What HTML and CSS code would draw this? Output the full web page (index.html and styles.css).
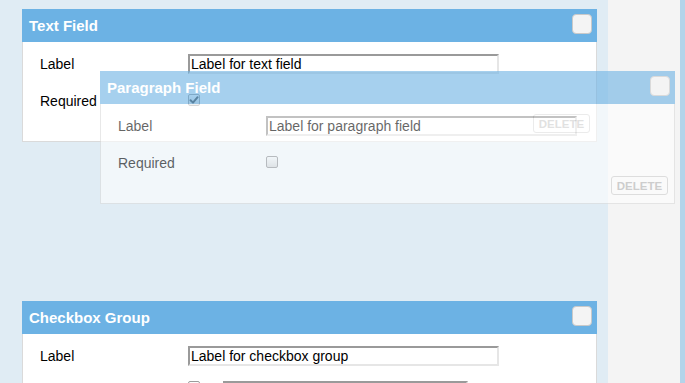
FILE: index.html
```html
<!DOCTYPE html>
<html lang="en">
<head>
<meta charset="utf-8">
<title>Form Builder</title>
<link rel="stylesheet" href="styles.css">
</head>
<body>
<div class="app">
  <main class="canvas">
    <section class="card">
      <header class="card-head">
        <h2 class="card-title">Text Field</h2>
        <span class="head-toggle"></span>
      </header>
      <div class="card-body">
        <div class="row">
          <span class="row-label">Label</span>
          <div class="row-value"><input class="text-input" type="text" value="Label for text field"></div>
        </div>
        <div class="row">
          <span class="row-label">Required</span>
          <div class="row-value"><span class="check is-checked"><svg viewBox="0 0 12 12" width="12" height="12"><path d="M2.5 6.2 L5 8.6 L9.6 3.2" fill="none" stroke="#3d3d3d" stroke-width="2" stroke-linecap="round" stroke-linejoin="round"/></svg></span></div>
        </div>
        <div class="card-foot"><button class="delete-btn" type="button">DELETE</button></div>
      </div>
    </section>

    <div class="drop-placeholder"></div>

    <section class="card">
      <header class="card-head">
        <h2 class="card-title">Checkbox Group</h2>
        <span class="head-toggle"></span>
      </header>
      <div class="card-body">
        <div class="row">
          <span class="row-label">Label</span>
          <div class="row-value"><input class="text-input" type="text" value="Label for checkbox group"></div>
        </div>
        <div class="row row-options">
          <span class="row-label"></span>
          <div class="row-value option-line"><span class="check"></span><input class="text-input option-input" type="text" value=""></div>
        </div>
      </div>
    </section>
  </main>
  <aside class="sidebar"></aside>
  <div class="edge-strip"></div>

  <section class="card drag-ghost">
    <header class="card-head">
      <h2 class="card-title">Paragraph Field</h2>
      <span class="head-toggle"></span>
    </header>
    <div class="card-body">
      <div class="row">
        <span class="row-label">Label</span>
        <div class="row-value"><input class="text-input" type="text" value="Label for paragraph field"></div>
      </div>
      <div class="row">
        <span class="row-label">Required</span>
        <div class="row-value"><span class="check"></span></div>
      </div>
      <div class="card-foot"><button class="delete-btn" type="button">DELETE</button></div>
    </div>
  </section>
</div>
</body>
</html>
```

FILE: styles.css
```css
* { box-sizing: border-box; }

html, body {
  margin: 0;
  padding: 0;
  height: 383px;
  overflow: hidden;
}

body {
  font-family: "Liberation Sans", Arial, sans-serif;
  font-size: 14px;
  color: #000;
  background: #f4f4f4;
}

.app {
  position: relative;
  display: flex;
  height: 383px;
}

.canvas {
  width: 608px;
  flex: none;
  background: #e0ecf4;
  padding: 9px 0 0 22px;
  display: flex;
  flex-direction: column;
  gap: 13px;
  overflow: hidden;
}

.sidebar {
  width: 72px;
  flex: none;
  background: #f4f4f4;
}

.edge-strip {
  width: 5px;
  flex: none;
  background: #b4d4ea;
}

.card {
  width: 575px;
  flex: none;
}

.card-head {
  height: 33px;
  background: #6cb2e4;
  display: flex;
  justify-content: space-between;
  align-items: flex-start;
  padding: 0 5px 0 7px;
}

.card-title {
  margin: 0;
  font-size: 15px;
  font-weight: bold;
  color: #fff;
  line-height: 33px;
}

.head-toggle {
  width: 20px;
  height: 20px;
  margin-top: 5px;
  border: 1px solid #c9c9c9;
  border-radius: 4px;
  background: #f4f4f4;
}

.card-body {
  background: #fff;
  border: 1px solid #dadada;
  border-top: none;
  padding: 9px 6px 8px 17px;
  display: flex;
  flex-direction: column;
}

.row {
  display: flex;
  align-items: center;
  height: 26px;
}

.row + .row {
  margin-top: 11px;
}

.row-label {
  width: 148px;
  flex: none;
}

.row-value {
  display: flex;
  align-items: center;
}

.text-input {
  width: 311px;
  height: 20px;
  margin: 0;
  padding: 0 1px;
  font-family: "Liberation Sans", Arial, sans-serif;
  font-size: 14px;
  color: #000;
  background: #fff;
  border-style: solid;
  border-width: 2px;
  border-color: #9a9a9a #e6e6e6 #e6e6e6 #9a9a9a;
  outline: none;
}

.check {
  width: 12px;
  height: 12px;
  margin-bottom: 3px;
  border: 1px solid #9c9c9c;
  border-radius: 2px;
  background: linear-gradient(#fdfdfd, #dedede);
  display: flex;
  align-items: center;
  justify-content: center;
}

.check svg {
  display: block;
  flex: none;
}

.card-foot {
  display: flex;
  justify-content: flex-end;
}

.delete-btn {
  width: 57px;
  height: 19px;
  padding: 0;
  font-family: "Liberation Sans", Arial, sans-serif;
  font-size: 11.5px;
  font-weight: bold;
  color: #b4b4b4;
  background: transparent;
  border: 1px solid #cfcfcf;
  border-radius: 3px;
}

.drop-placeholder {
  height: 133px;
  flex: none;
}

.row-options {
  align-items: flex-start;
}

.option-line {
  align-items: flex-start;
  padding-top: 1px;
  gap: 23px;
}

.option-line .check {
  margin: 0;
}

.option-input {
  width: 245px;
}

.drag-ghost {
  position: absolute;
  left: 100px;
  top: 71px;
  opacity: 0.6;
  z-index: 5;
}
```
